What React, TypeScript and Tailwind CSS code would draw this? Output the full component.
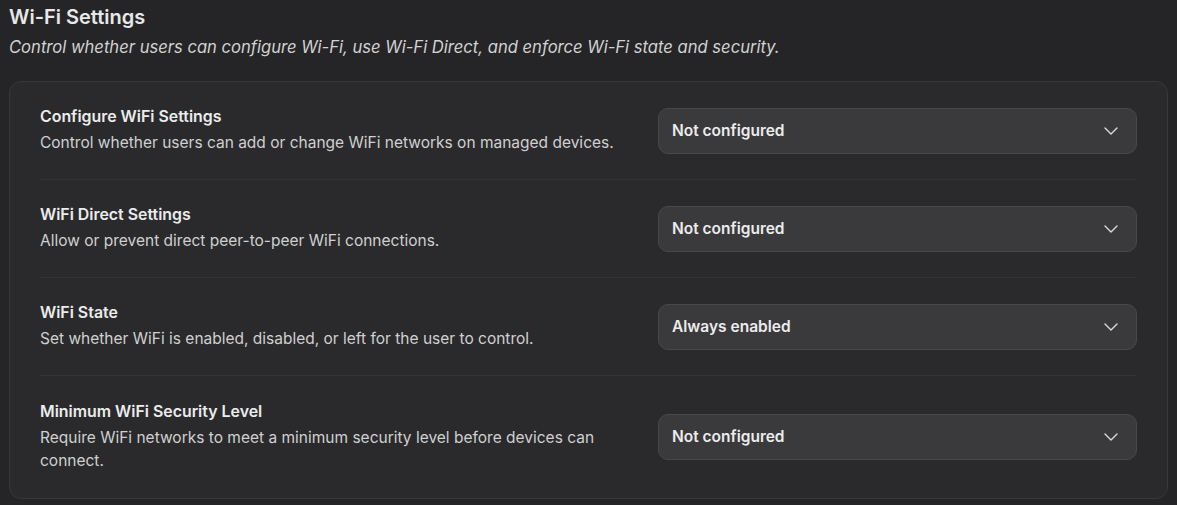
import React from "react";

type Row = { title: string; desc: string; value: string };

const rows: Row[] = [
  {
    title: "Configure WiFi Settings",
    desc: "Control whether users can add or change WiFi networks on managed devices.",
    value: "Not configured",
  },
  {
    title: "WiFi Direct Settings",
    desc: "Allow or prevent direct peer-to-peer WiFi connections.",
    value: "Not configured",
  },
  {
    title: "WiFi State",
    desc: "Set whether WiFi is enabled, disabled, or left for the user to control.",
    value: "Always enabled",
  },
  {
    title: "Minimum WiFi Security Level",
    desc: "Require WiFi networks to meet a minimum security level before devices can connect.",
    value: "Not configured",
  },
];

function Chevron() {
  return (
    <svg width="14" height="8" viewBox="0 0 14 8" fill="none" className="text-[#dcdcdc]">
      <path d="M1 1l6 6 6-6" stroke="currentColor" strokeWidth={1.4} strokeLinecap="round" strokeLinejoin="round" />
    </svg>
  );
}

export default function App() {
  return (
    <div className="min-h-screen bg-[#252527] px-[9px] pt-[5px] font-['Inter',sans-serif] text-[#e6e6e6]">
      {/* header */}
      <h2 className="text-[20px] font-semibold leading-[24px] text-[#e8e8e8]">Wi-Fi Settings</h2>
      <p className="mt-[6px] text-[16.6px] italic leading-[24px] text-[#d2d2d2]">
        Control whether users can configure Wi-Fi, use Wi-Fi Direct, and enforce Wi-Fi state and security.
      </p>

      {/* card */}
      <div className="mt-[22px] rounded-[12px] border border-[#38383a] bg-[#2a2a2c] px-[30px]">
        {rows.map((r, i) => (
          <div
            key={r.title}
            className={`flex items-center gap-[25px] ${
              i < rows.length - 1 ? "border-b border-[#333335] py-[25px]" : "py-[26px]"
            }`}
          >
            <div className="flex-1">
              <div className="text-[15.9px] font-semibold leading-[20px] text-[#ececec]">{r.title}</div>
              <div className="mt-[4px] text-[15.5px] leading-[23px] text-[#d0d0d0]">{r.desc}</div>
            </div>
            <button className="flex h-[46px] w-[479px] items-center justify-between rounded-[10px] border border-[#48484a] bg-[#3a3a3c] pl-[13px] pr-[18px] text-left">
              <span className="text-[15.5px] font-semibold text-[#ececec]">{r.value}</span>
              <Chevron />
            </button>
          </div>
        ))}
      </div>
    </div>
  );
}
